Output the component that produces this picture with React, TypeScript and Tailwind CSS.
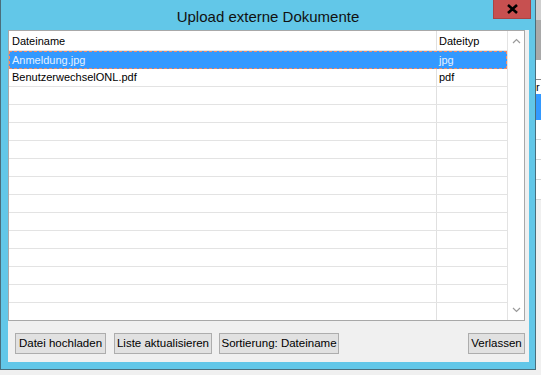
import React from "react";

const font = { fontFamily: '"Liberation Sans", Arial, sans-serif' };

const files = [
  { name: "Anmeldung.jpg", type: "jpg", selected: true },
  { name: "BenutzerwechselONL.pdf", type: "pdf", selected: false },
];

const emptyRows = Array.from({ length: 13 });

function Button({ label, className = "" }: { label: string; className?: string }) {
  return (
    <div
      className={`h-[21px] flex items-center justify-center bg-[#e1e1e1] border border-[#adadad] text-[11.5px] text-black ${className}`}
    >
      {label}
    </div>
  );
}

function Chevron({ up }: { up?: boolean }) {
  return (
    <svg width="9" height="6" viewBox="0 0 9 6">
      <path
        d={up ? "M1 5 L4.5 1.5 L8 5" : "M1 1 L4.5 4.5 L8 1"}
        fill="none"
        stroke="#9a9a9a"
        strokeWidth="1.2"
      />
    </svg>
  );
}

export default function App() {
  return (
    <div className="w-[541px] h-[375px] bg-[#f0f0f0] flex overflow-hidden" style={font}>
      <div className="w-[536px] h-[370px] flex flex-col bg-[#62c7e8] border-l border-r border-b border-[#4a6e7c]">
        {/* title bar */}
        <div className="h-[30px] relative flex items-center justify-center">
          <span className="text-[15px] text-[#111] pt-[4px]">Upload externe Dokumente</span>
          <div className="absolute right-[4px] top-0 w-[38px] h-[19px] bg-[#c75050] border border-t-0 border-[#a84444] flex items-center justify-center">
            <svg width="11" height="10" viewBox="0 0 11 10">
              <path d="M1 1 L10 9 M10 1 L1 9" stroke="#000" strokeWidth="2.6" />
            </svg>
          </div>
        </div>

        {/* client area */}
        <div className="mx-[7px] mr-[6px] h-[332px] bg-[#f0f0f0] flex flex-col">
          <div className="w-[517px] h-[291px] border border-[#a8a8a8] bg-white flex overflow-hidden">
            <div className="w-[498px] flex flex-col text-[11px] text-black">
              <div className="h-[20px] shrink-0 flex border-b border-[#e5e5e5]">
                <div className="w-[428px] border-r border-[#e0e0e0] pl-[3px] pt-[2px] flex items-center">Dateiname</div>
                <div className="flex-1 pl-[2px] pt-[2px] flex items-center">Dateityp</div>
              </div>
              {files.map((f) =>
                f.selected ? (
                  <div
                    key={f.name}
                    className="h-[18px] shrink-0 flex bg-[#3399ff] text-[#e4f1ff] border border-dashed border-[#f08a68]"
                  >
                    <div className="w-[427px] pl-[2px] flex items-center">{f.name}</div>
                    <div className="flex-1 pl-[2px] flex items-center">{f.type}</div>
                  </div>
                ) : (
                  <div key={f.name} className="h-[18px] shrink-0 flex border-b border-[#e3e3e3]">
                    <div className="w-[428px] border-r border-[#e0e0e0] pl-[3px] flex items-center">{f.name}</div>
                    <div className="flex-1 pl-[2px] flex items-center">{f.type}</div>
                  </div>
                )
              )}
              {emptyRows.map((_, i) => (
                <div key={i} className="h-[18px] shrink-0 flex border-b border-[#e3e3e3]">
                  <div className="w-[428px] border-r border-[#e0e0e0]" />
                  <div className="flex-1" />
                </div>
              ))}
            </div>
            <div className="flex-1 border-l border-[#e3e3e3] flex flex-col items-center justify-between pt-[7px] pb-[7px]">
              <Chevron up />
              <Chevron />
            </div>
          </div>

          <div className="flex items-center mt-[12px] pl-[7px] pr-[4px]">
            <Button label="Datei hochladen" className="w-[91px]" />
            <Button label="Liste aktualisieren" className="w-[98px] ml-[8px]" />
            <Button label="Sortierung: Dateiname" className="w-[120px] ml-[7px]" />
            <div className="flex-1" />
            <Button label="Verlassen" className="w-[57px]" />
          </div>
        </div>
      </div>

      {/* sliver of the window behind */}
      <div className="flex-1 flex flex-col">
        <div className="h-[20px] bg-[#cfcfcf]" />
        <div className="h-[40px] bg-[#a9a9a9]" />
        <div className="h-[20px] bg-white border-b border-[#8a8a8a]" />
        <div className="h-[14px] bg-white text-[11px] leading-[14px] text-black">r</div>
        <div className="h-[26px] bg-[#3399ff]" />
        <div className="h-[20px] bg-white border-b border-[#d8d8d8]" />
        <div className="h-[20px] bg-white border-b border-[#d8d8d8]" />
        <div className="h-[20px] bg-white border-b border-[#d8d8d8]" />
        <div className="h-[20px] bg-white border-b border-[#d8d8d8]" />
        <div className="flex-1 bg-[#f0f0f0]" />
      </div>
    </div>
  );
}
